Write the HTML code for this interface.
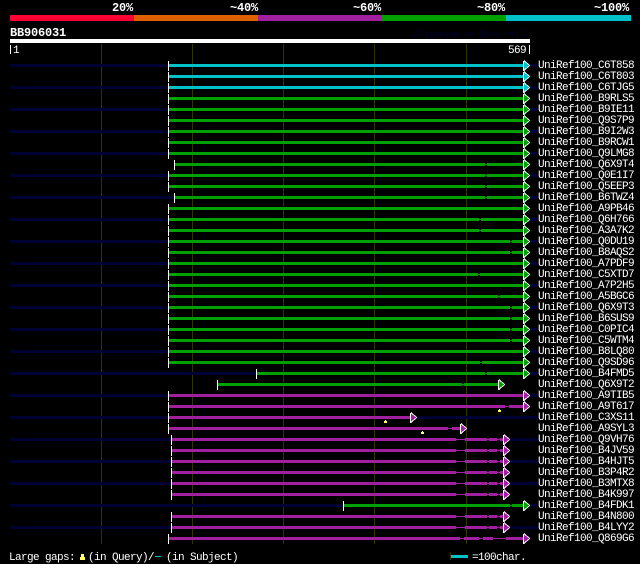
<!DOCTYPE html>
<html><head><meta charset="utf-8"><title>AlignView</title>
<style>
html,body{margin:0;padding:0;background:#000;width:640px;height:564px;overflow:hidden}
svg{display:block;shape-rendering:crispEdges}
text{font-family:"Liberation Mono",monospace;font-size:11px;letter-spacing:-.6px;fill:#fff}
.b{font-weight:bold;font-size:12px;letter-spacing:-.2px}
.k{stroke-width:3;fill:none}
.t{stroke-width:1;fill:none}
.n{fill:#000033}
.c{stroke:#00c0c8;fill:#00c0c8;color:#00c0c8}
.g{stroke:#00a000;fill:#00a000}
.p{stroke:#a020a0;fill:#a020a0}
</style></head><body>
<svg width="640" height="564" viewBox="0 0 640 564" xmlns="http://www.w3.org/2000/svg">
<defs>
<rect id="T" width="1" height="10" fill="#fff" stroke="none"/>
<g id="A"><polygon points="1,-1 7.5,4.5 1,10" fill="#fff" stroke="none"/><polygon points="1,0.5 6.2,4.5 1,8.5" stroke="none"/><rect width="1" height="10" y="0" fill="#fff" stroke="none"/></g>
</defs>
<rect x="10" y="15" width="124" height="6" fill="#ff0033"/>
<rect x="134" y="15" width="124" height="6" fill="#e06000"/>
<rect x="258" y="15" width="124" height="6" fill="#a020a0"/>
<rect x="382" y="15" width="124" height="6" fill="#00a000"/>
<rect x="506" y="15" width="125" height="6" fill="#00c0c8"/>
<text class="b" x="112" y="11">20%</text>
<text class="b" x="230" y="11">~40%</text>
<text class="b" x="353" y="11">~60%</text>
<text class="b" x="477" y="11">~80%</text>
<text class="b" x="594" y="11">~100%</text>
<text class="b" x="10" y="36">BB906031</text>
<text x="414" y="37" style="font-size:9px;letter-spacing:-.4px;fill:#000033">AlignView.pm Beta rel.7</text>
<rect x="10" y="39" width="520" height="4" fill="#fff"/>
<rect x="10" y="45" width="1" height="9" fill="#fff"/>
<rect x="529" y="45" width="1" height="9" fill="#fff"/>
<text x="13" y="53">1</text>
<text x="508" y="53">569</text>
<g fill="#333300">
<rect x="101" y="44" width="1" height="500"/>
<rect x="192" y="44" width="1" height="500"/>
<rect x="283" y="44" width="1" height="500"/>
<rect x="374" y="44" width="1" height="500"/>
<rect x="466" y="44" width="1" height="500"/>
</g>
<!-- navy context lines -->
<g class="n">
<rect x="10" y="64" width="158" height="3"/><rect x="529" y="64" width="9" height="3"/>
<rect x="10" y="86" width="158" height="3"/><rect x="529" y="86" width="9" height="3"/>
<rect x="10" y="108" width="158" height="3"/><rect x="529" y="108" width="9" height="3"/>
<rect x="10" y="130" width="158" height="3"/><rect x="529" y="130" width="9" height="3"/>
<rect x="10" y="152" width="158" height="3"/><rect x="529" y="152" width="9" height="3"/>
<rect x="10" y="174" width="158" height="3"/><rect x="529" y="174" width="9" height="3"/>
<rect x="10" y="196" width="164" height="3"/><rect x="529" y="196" width="9" height="3"/>
<rect x="10" y="218" width="158" height="3"/><rect x="529" y="218" width="9" height="3"/>
<rect x="10" y="240" width="158" height="3"/><rect x="529" y="240" width="9" height="3"/>
<rect x="10" y="262" width="158" height="3"/><rect x="529" y="262" width="9" height="3"/>
<rect x="10" y="284" width="158" height="3"/><rect x="529" y="284" width="9" height="3"/>
<rect x="10" y="306" width="158" height="3"/><rect x="529" y="306" width="9" height="3"/>
<rect x="10" y="328" width="158" height="3"/><rect x="529" y="328" width="9" height="3"/>
<rect x="10" y="350" width="158" height="3"/><rect x="529" y="350" width="9" height="3"/>
<rect x="10" y="372" width="246" height="3"/><rect x="529" y="372" width="9" height="3"/>
<rect x="10" y="394" width="158" height="3"/><rect x="529" y="394" width="9" height="3"/>
<rect x="10" y="416" width="158" height="3"/><rect x="416" y="416" width="122" height="3"/>
<rect x="10" y="438" width="161" height="3"/><rect x="509" y="438" width="29" height="3"/>
<rect x="10" y="460" width="161" height="3"/><rect x="509" y="460" width="29" height="3"/>
<rect x="10" y="482" width="161" height="3"/><rect x="509" y="482" width="29" height="3"/>
<rect x="10" y="504" width="333" height="3"/><rect x="529" y="504" width="9" height="3"/>
<rect x="10" y="526" width="161" height="3"/><rect x="509" y="526" width="29" height="3"/>
</g>
<!-- cyan rows -->
<g class="c">
<path class="k" d="M169 65.5H523M169 76.5H523M169 87.5H523"/>
<use href="#T" x="168" y="61"/><use href="#A" x="523" y="61"/>
<use href="#T" x="168" y="72"/><use href="#A" x="523" y="72"/>
<use href="#T" x="168" y="83"/><use href="#A" x="523" y="83"/>
</g>
<!-- green rows -->
<g class="g">
<path class="k" d="M169 98.5H523M169 109.5H523M169 120.5H523M169 131.5H523M169 142.5H523M169 153.5H523
M175 164.5H485M487 164.5H523M169 175.5H485M487 175.5H523M169 186.5H485M487 186.5H523M175 197.5H485M487 197.5H523
M169 208.5H523M169 219.5H479M481 219.5H523M169 230.5H479M481 230.5H523M169 241.5H510M512 241.5H523M169 252.5H510M512 252.5H523
M169 263.5H523M169 274.5H478M480 274.5H523M169 285.5H523M169 296.5H498M500 296.5H523M169 307.5H510M512 307.5H523
M169 318.5H510M512 318.5H523M169 329.5H510M512 329.5H523M169 340.5H510M512 340.5H523M169 351.5H523M169 362.5H480M482 362.5H523
M257 373.5H485M487 373.5H523M218 384.5H462M464 384.5H498M344 505.5H510M512 505.5H523"/>
<path class="t" d="M485 164.5h2M485 175.5h2M485 186.5h2M485 197.5h2M479 219.5h2M479 230.5h2M510 241.5h2M510 252.5h2M478 274.5h2M498 296.5h2M510 307.5h2M510 318.5h2M510 329.5h2M510 340.5h2M480 362.5h2M485 373.5h2M462 384.5h2M510 505.5h2"/>
<use href="#T" x="168" y="94"/><use href="#A" x="523" y="94"/>
<use href="#T" x="168" y="105"/><use href="#A" x="523" y="105"/>
<use href="#T" x="168" y="116"/><use href="#A" x="523" y="116"/>
<use href="#T" x="168" y="127"/><use href="#A" x="523" y="127"/>
<use href="#T" x="168" y="138"/><use href="#A" x="523" y="138"/>
<use href="#T" x="168" y="149"/><use href="#A" x="523" y="149"/>
<use href="#T" x="174" y="160"/><use href="#A" x="523" y="160"/>
<use href="#T" x="168" y="171"/><use href="#A" x="523" y="171"/>
<use href="#T" x="168" y="182"/><use href="#A" x="523" y="182"/>
<use href="#T" x="174" y="193"/><use href="#A" x="523" y="193"/>
<use href="#T" x="168" y="204"/><use href="#A" x="523" y="204"/>
<use href="#T" x="168" y="215"/><use href="#A" x="523" y="215"/>
<use href="#T" x="168" y="226"/><use href="#A" x="523" y="226"/>
<use href="#T" x="168" y="237"/><use href="#A" x="523" y="237"/>
<use href="#T" x="168" y="248"/><use href="#A" x="523" y="248"/>
<use href="#T" x="168" y="259"/><use href="#A" x="523" y="259"/>
<use href="#T" x="168" y="270"/><use href="#A" x="523" y="270"/>
<use href="#T" x="168" y="281"/><use href="#A" x="523" y="281"/>
<use href="#T" x="168" y="292"/><use href="#A" x="523" y="292"/>
<use href="#T" x="168" y="303"/><use href="#A" x="523" y="303"/>
<use href="#T" x="168" y="314"/><use href="#A" x="523" y="314"/>
<use href="#T" x="168" y="325"/><use href="#A" x="523" y="325"/>
<use href="#T" x="168" y="336"/><use href="#A" x="523" y="336"/>
<use href="#T" x="168" y="347"/><use href="#A" x="523" y="347"/>
<use href="#T" x="168" y="358"/><use href="#A" x="523" y="358"/>
<use href="#T" x="256" y="369"/><use href="#A" x="523" y="369"/>
<use href="#T" x="217" y="380"/><use href="#A" x="498" y="380"/>
<use href="#T" x="343" y="501"/><use href="#A" x="523" y="501"/>
</g>
<!-- purple rows -->
<g class="p">
<path class="k" d="M169 395.5H523M169 406.5H505M509 406.5H523M169 417.5H410M169 428.5H448M452 428.5H460
M172 439.5H456M465 439.5H487M489 439.5H497M500 439.5H503
M172 450.5H456M465 450.5H487M489 450.5H497M500 450.5H503
M172 461.5H456M465 461.5H487M489 461.5H497M500 461.5H503
M172 472.5H456M465 472.5H487M489 472.5H497M500 472.5H503
M172 483.5H456M465 483.5H487M489 483.5H497M500 483.5H503
M172 494.5H456M465 494.5H487M489 494.5H497M500 494.5H503
M172 516.5H456M465 516.5H487M489 516.5H497M500 516.5H503
M172 527.5H456M465 527.5H487M489 527.5H497M500 527.5H503
M169 538.5H460M464 538.5H479M483 538.5H493M506 538.5H523"/>
<path class="t" d="M505 406.5h4M448 428.5h4
M456 439.5h9M487 439.5h2M497 439.5h3
M456 450.5h9M487 450.5h2M497 450.5h3
M456 461.5h9M487 461.5h2M497 461.5h3
M456 472.5h9M487 472.5h2M497 472.5h3
M456 483.5h9M487 483.5h2M497 483.5h3
M456 494.5h9M487 494.5h2M497 494.5h3
M456 516.5h9M487 516.5h2M497 516.5h3
M456 527.5h9M487 527.5h2M497 527.5h3
M460 538.5h4M479 538.5h4M493 538.5h13"/>
<use href="#T" x="168" y="391"/><use href="#A" x="523" y="391"/>
<use href="#T" x="168" y="402"/><use href="#A" x="523" y="402"/>
<use href="#T" x="168" y="413"/><use href="#A" x="410" y="413"/>
<use href="#T" x="168" y="424"/><use href="#A" x="460" y="424"/>
<use href="#T" x="171" y="435"/><use href="#A" x="503" y="435"/>
<use href="#T" x="171" y="446"/><use href="#A" x="503" y="446"/>
<use href="#T" x="171" y="457"/><use href="#A" x="503" y="457"/>
<use href="#T" x="171" y="468"/><use href="#A" x="503" y="468"/>
<use href="#T" x="171" y="479"/><use href="#A" x="503" y="479"/>
<use href="#T" x="171" y="490"/><use href="#A" x="503" y="490"/>
<use href="#T" x="171" y="512"/><use href="#A" x="503" y="512"/>
<use href="#T" x="171" y="523"/><use href="#A" x="503" y="523"/>
<use href="#T" x="168" y="534"/><use href="#A" x="523" y="534"/>
</g>
<!-- gap markers -->
<g fill="#ffff66">
<rect x="498" y="410" width="3" height="2"/><rect x="499" y="409" width="1" height="1"/>
<rect x="384" y="421" width="3" height="2"/><rect x="385" y="420" width="1" height="1"/>
<rect x="421" y="432" width="3" height="2"/><rect x="422" y="431" width="1" height="1"/>
</g>
<!-- labels -->
<g transform="translate(0,-1)">
<text x="538" y="69">UniRef100_C6T858</text>
<text x="538" y="80">UniRef100_C6T803</text>
<text x="538" y="91">UniRef100_C6TJG5</text>
<text x="538" y="102">UniRef100_B9RLS5</text>
<text x="538" y="113">UniRef100_B9IE11</text>
<text x="538" y="124">UniRef100_Q9S7P9</text>
<text x="538" y="135">UniRef100_B9I2W3</text>
<text x="538" y="146">UniRef100_B9RCW1</text>
<text x="538" y="157">UniRef100_Q9LMG8</text>
<text x="538" y="168">UniRef100_Q6X9T4</text>
<text x="538" y="179">UniRef100_Q0E1I7</text>
<text x="538" y="190">UniRef100_Q5EEP3</text>
<text x="538" y="201">UniRef100_B6TWZ4</text>
<text x="538" y="212">UniRef100_A9PB46</text>
<text x="538" y="223">UniRef100_Q6H766</text>
<text x="538" y="234">UniRef100_A3A7K2</text>
<text x="538" y="245">UniRef100_Q0DU19</text>
<text x="538" y="256">UniRef100_B8AQS2</text>
<text x="538" y="267">UniRef100_A7PDF9</text>
<text x="538" y="278">UniRef100_C5XTD7</text>
<text x="538" y="289">UniRef100_A7P2H5</text>
<text x="538" y="300">UniRef100_A5BGC6</text>
<text x="538" y="311">UniRef100_Q6X9T3</text>
<text x="538" y="322">UniRef100_B6SUS9</text>
<text x="538" y="333">UniRef100_C0PIC4</text>
<text x="538" y="344">UniRef100_C5WTM4</text>
<text x="538" y="355">UniRef100_B8LQ80</text>
<text x="538" y="366">UniRef100_Q9SD96</text>
<text x="538" y="377">UniRef100_B4FMD5</text>
<text x="538" y="388">UniRef100_Q6X9T2</text>
<text x="538" y="399">UniRef100_A9TIB5</text>
<text x="538" y="410">UniRef100_A9T617</text>
<text x="538" y="421">UniRef100_C3XS11</text>
<text x="538" y="432">UniRef100_A9SYL3</text>
<text x="538" y="443">UniRef100_Q9VH76</text>
<text x="538" y="454">UniRef100_B4JV59</text>
<text x="538" y="465">UniRef100_B4HJT5</text>
<text x="538" y="476">UniRef100_B3P4R2</text>
<text x="538" y="487">UniRef100_B3MTX8</text>
<text x="538" y="498">UniRef100_B4K997</text>
<text x="538" y="509">UniRef100_B4FDK1</text>
<text x="538" y="520">UniRef100_B4N800</text>
<text x="538" y="531">UniRef100_B4LYY2</text>
<text x="538" y="542">UniRef100_Q869G6</text>
</g>
<!-- footer -->
<text x="9" y="560">Large gaps:</text>
<polygon points="80,560 85,560 85,557 84,557 84,554 81,554 81,557 80,557" fill="#ffff66"/>
<text x="88" y="560">(in Query)/</text>
<rect x="155" y="556" width="6" height="1" fill="#00c0c8"/>
<text x="166" y="560">(in Subject)</text>
<rect x="450" y="552" width="1" height="8" fill="#333300"/>
<rect x="451" y="555" width="17" height="3" fill="#00c0c8"/>
<text x="472" y="560">=100char.</text>
</svg>
</body></html>
